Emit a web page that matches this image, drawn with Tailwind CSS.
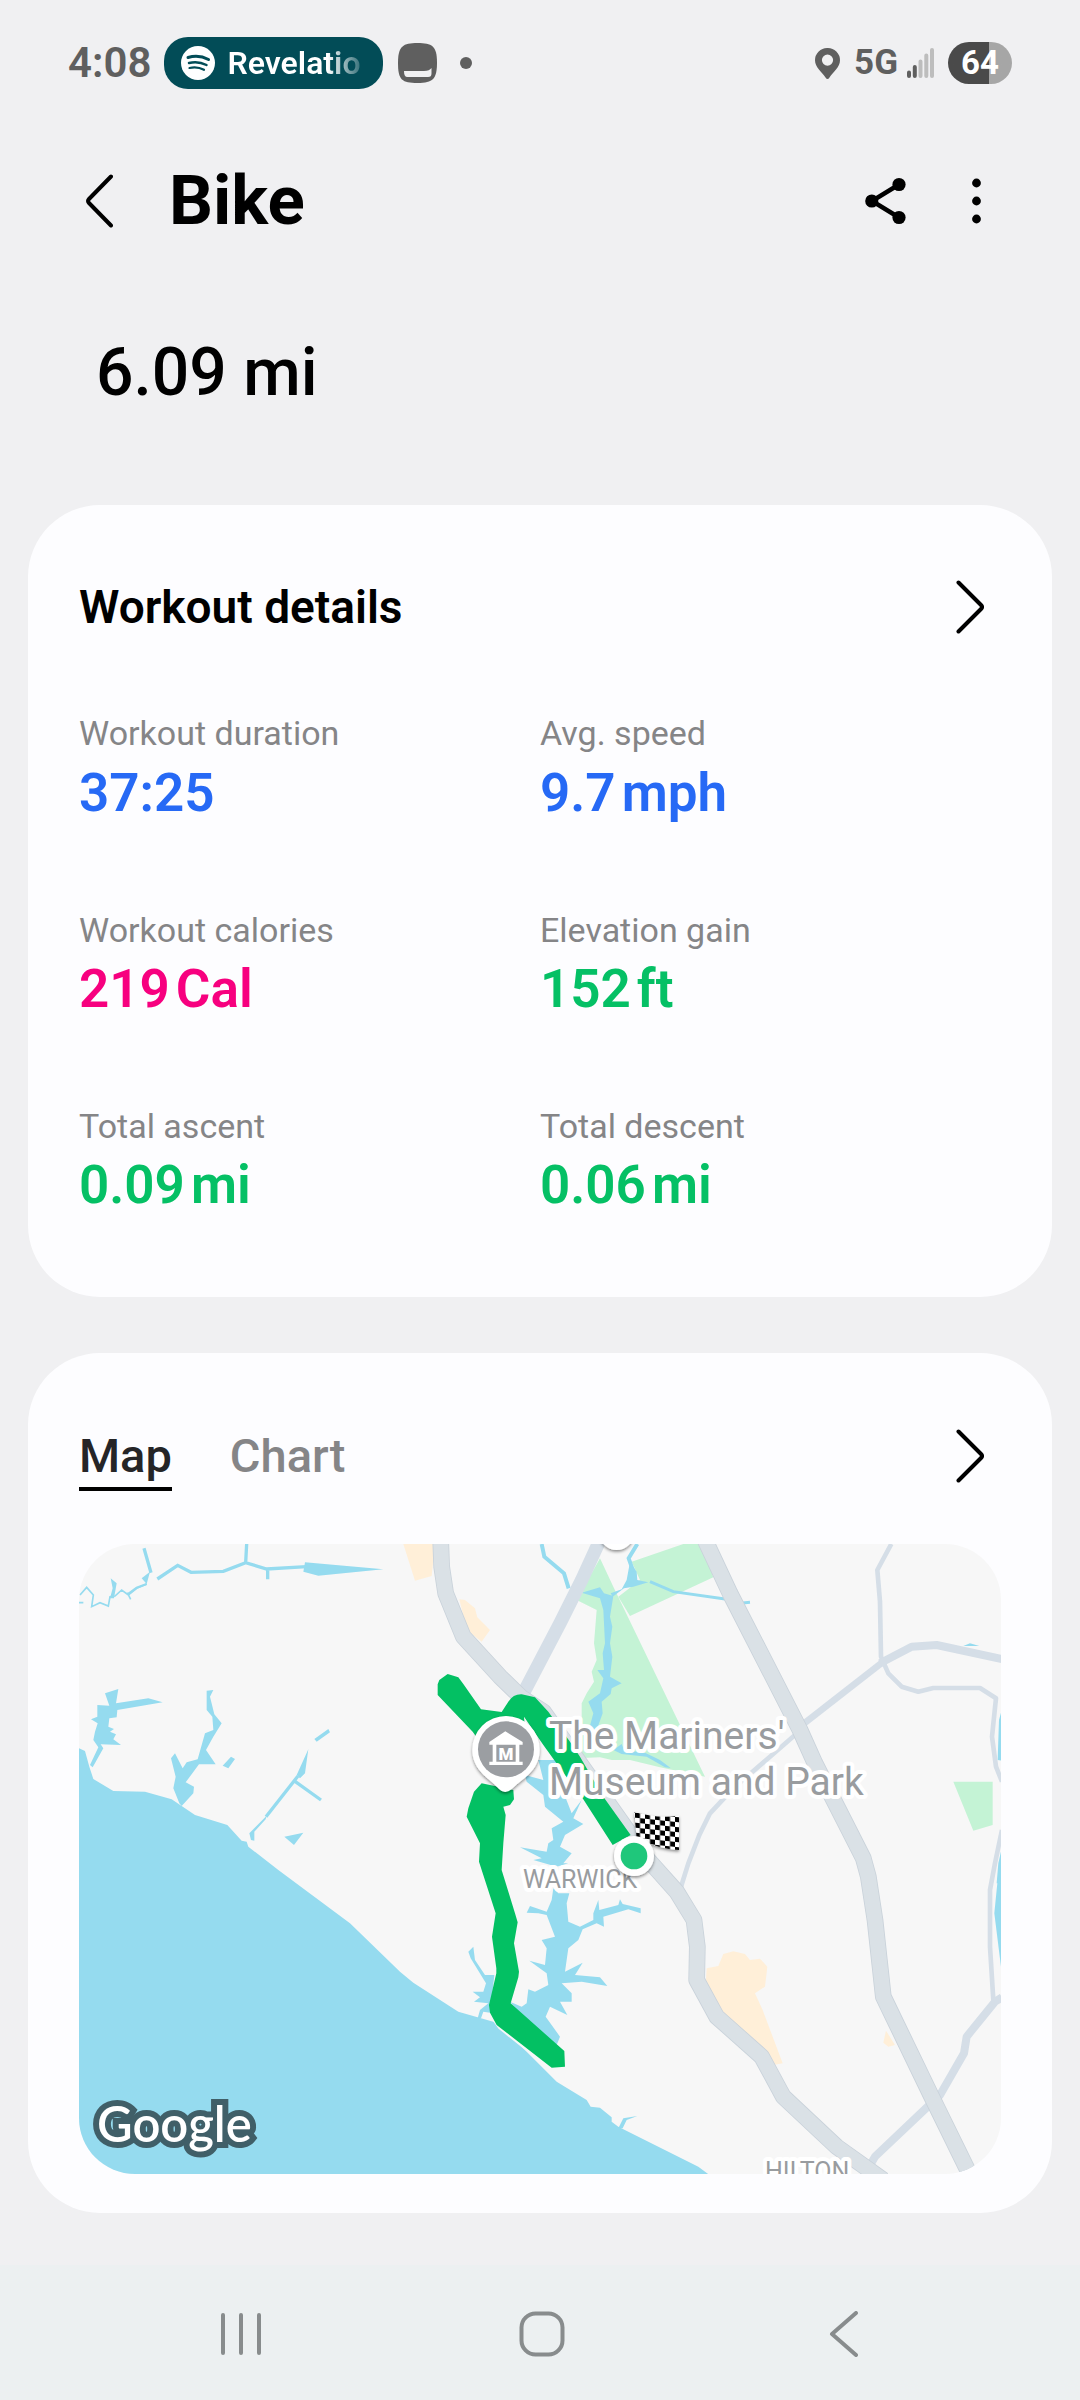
<!DOCTYPE html>
<html lang="en">
<head>
<meta charset="utf-8">
<meta name="viewport" content="width=device-width, initial-scale=1">
<title>Bike workout</title>
<script src="https://cdn.jsdelivr.net/npm/@tailwindcss/browser@4"></script>
</head>
<body class="flex min-h-screen flex-col bg-[#f0f0f2] font-['Roboto',sans-serif] text-black">

<!-- Status bar -->
<div class="flex items-center justify-between pt-[35px] pr-[68px] pl-[68px]">
  <div class="flex items-center">
    <span class="text-[42px] leading-[52px] font-semibold text-[#5f5f5f]">4:08</span>
    <div class="ml-[13px] flex h-[52px] w-[219px] items-center gap-3 rounded-3xl bg-[#024c57] pl-[17px]">
      <svg class="size-[34px] shrink-0" viewBox="0 0 34 34" fill="none" stroke="#024c57" stroke-linecap="round">
        <circle cx="17" cy="17" r="17" fill="#fff" stroke="none"/>
        <path d="M7 11.500c7-2 14.500-1.200 20.500 2" stroke-width="3"/>
        <path d="M8 17c6-1.500 12-.8 17.500 2" stroke-width="2.500"/>
        <path d="M8.500 22c5-1.200 10-.6 14.500 1.800" stroke-width="2.200"/>
      </svg>
      <span class="overflow-hidden bg-linear-to-r from-white from-75% to-white/20 bg-clip-text text-[32px] leading-[52px] font-semibold text-transparent">Revelatio</span>
    </div>
    <svg class="ml-[15px] h-[40px] w-[39px]" viewBox="0 0 39 40">
      <path d="M19.500 0C34 0 39 3 39 19.500S35 40 19.500 40 0 37 0 20 5 0 19.500 0Z" fill="#5f5f5f"/>
      <path d="M6 28h20c4 0 6-1 7.500-3v5.500c0 2.500-1 3.500-3.500 3.500H9.500C7 34 6 32 6 28Z" fill="#f0f0f2"/>
    </svg>
    <span class="ml-[23px] size-3 rounded-full bg-[#5f5f5f]"></span>
  </div>
  <div class="flex items-center">
    <svg class="h-[31px] w-[25px]" viewBox="0 0 25 31"><path fill="#5f5f5f" fill-rule="evenodd" d="M12.500 0A12.300 12.300 0 0 0 0 12.300c0 7 6.500 11 10.500 17.200q2 3 4 0C18.500 23.300 25 19.300 25 12.300A12.300 12.300 0 0 0 12.500 0Zm0 6.500a5.600 5.600 0 1 1 0 11.200 5.600 5.600 0 0 1 0-11.200Z"/></svg>
    <span class="ml-[14px] text-[35px] leading-[56px] font-bold text-[#5f5f5f]">5G</span>
    <svg class="ml-[9px] h-[30px] w-[27px]" viewBox="0 0 27 30" stroke-width="4" stroke-linecap="round">
      <path d="M2 24.500V28M7.800 19V28" stroke="#5f5f5f"/>
      <path d="M13.500 13.500V28M19.300 7.500V28M25 2V28" stroke="#bdbdbd"/>
    </svg>
    <div class="ml-[14px] flex h-[42px] w-16 items-center justify-center rounded-full bg-linear-to-r from-[#4a4a4a] from-64% to-[#a6a6a6] to-64%">
      <span class="text-[33px] leading-[42px] font-bold text-white">64</span>
    </div>
  </div>
</div>

<!-- App bar -->
<header class="mt-[62px] flex h-24 items-center pr-[99px] pl-[86px]">
  <button type="button" aria-label="Back" class="w-[27px]">
    <svg class="h-[54px] w-[27px]" viewBox="0 0 27 54" fill="none" stroke="#000" stroke-width="4" stroke-linecap="round" stroke-linejoin="round"><path d="M25 2.500 3 25q-2 2 0 4L25 51.500"/></svg>
  </button>
  <h1 class="ml-14 text-[69px] leading-[80px] font-bold">Bike</h1>
  <button type="button" aria-label="Share" class="ml-auto">
    <svg class="h-[48px] w-[41px]" viewBox="0 0 41 48"><path d="M34 7.500 7 24l27 16.500" fill="none" stroke="#000" stroke-width="4.500"/><circle cx="34" cy="7.500" r="6.600"/><circle cx="6.800" cy="24" r="6.600"/><circle cx="34" cy="40.500" r="6.600"/></svg>
  </button>
  <button type="button" aria-label="More options" class="ml-[66px]">
    <svg class="h-[46px] w-[9px]" viewBox="0 0 9 46"><circle cx="4.500" cy="5" r="4.400"/><circle cx="4.500" cy="23" r="4.400"/><circle cx="4.500" cy="41" r="4.400"/></svg>
  </button>
</header>

<main>
  <p class="mt-[90px] pl-24 text-[66px] leading-[68px] font-medium">6.09 mi</p>

  <section class="mx-7 mt-[98px] rounded-[72px] bg-[#fdfdff] px-[51px] pt-[76px] pb-[82px]">
    <div class="flex h-[52px] items-center justify-between pr-[17px]">
      <h2 class="text-[46px] leading-[52px] font-semibold">Workout details</h2>
      <button type="button" aria-label="Open workout details">
        <svg class="block h-[54px] w-[28px]" viewBox="0 0 28 54" fill="none" stroke="#000" stroke-width="4" stroke-linecap="round" stroke-linejoin="round"><path d="M2.500 2.500 25 25q2 2 0 4L2.500 51.500"/></svg>
      </button>
    </div>
    <dl class="mt-[78px] grid grid-cols-2 gap-y-[85px]">
      <div><dt class="text-[34px] leading-[44px] text-[#858587]">Workout duration</dt><dd class="mt-2 text-[53px] leading-[60px] font-semibold text-[#2669f5]">37:25</dd></div>
      <div><dt class="text-[34px] leading-[44px] text-[#858587]">Avg. speed</dt><dd class="mt-2 flex gap-1.5 text-[53px] leading-[60px] font-semibold text-[#2669f5]"><span>9.7</span><span>mph</span></dd></div>
      <div><dt class="text-[34px] leading-[44px] text-[#858587]">Workout calories</dt><dd class="mt-[7px] flex gap-1.5 text-[53px] leading-[60px] font-semibold text-[#f7007f]"><span>219</span><span>Cal</span></dd></div>
      <div><dt class="text-[34px] leading-[44px] text-[#858587]">Elevation gain</dt><dd class="mt-[7px] flex gap-1.5 text-[53px] leading-[60px] font-semibold text-[#05c065]"><span>152</span><span>ft</span></dd></div>
      <div><dt class="text-[34px] leading-[44px] text-[#858587]">Total ascent</dt><dd class="mt-[7px] flex gap-1.5 text-[53px] leading-[60px] font-semibold text-[#05c065]"><span>0.09</span><span>mi</span></dd></div>
      <div><dt class="text-[34px] leading-[44px] text-[#858587]">Total descent</dt><dd class="mt-[7px] flex gap-1.5 text-[53px] leading-[60px] font-semibold text-[#05c065]"><span>0.06</span><span>mi</span></dd></div>
    </dl>
  </section>

  <section class="mx-7 mt-14 mb-[52px] rounded-[72px] bg-[#fdfdff] px-[51px] pt-[77px] pb-[39px]">
    <div class="flex items-start justify-between pr-[17px]">
      <div role="tablist" class="flex gap-[58px]">
        <button type="button" role="tab" aria-selected="true" class="border-b-4 border-black pb-[5px] text-[47px] leading-[52px] font-medium text-[#252527]">Map</button>
        <button type="button" role="tab" aria-selected="false" class="border-b-4 border-transparent pb-[5px] text-[47px] leading-[52px] font-medium text-[#858587]">Chart</button>
      </div>
      <button type="button" aria-label="Open map" class="flex h-[52px] items-center">
        <svg class="block h-[54px] w-[28px]" viewBox="0 0 28 54" fill="none" stroke="#000" stroke-width="4" stroke-linecap="round" stroke-linejoin="round"><path d="M2.500 2.500 25 25q2 2 0 4L2.500 51.500"/></svg>
      </button>
    </div>

    <div class="mt-[53px] overflow-hidden rounded-[56px]">
      <svg class="block h-auto w-full" viewBox="0 0 922 630" role="img" aria-label="Route map">
        <defs>
          <pattern id="checks" width="30" height="30" patternUnits="userSpaceOnUse" patternTransform="translate(705 848) skewY(6)"><path fill="#fff" d="M0 0h30v30H0z"/><path d="M0 0h15v15H0zM15 15h15v15H15z"/></pattern>
          <filter id="shade" x="-20%" y="-20%" width="140%" height="140%"><feDropShadow dx="0" dy="5" stdDeviation="5" flood-opacity=".45"/></filter>
        </defs>
        <path fill="#f7f7f7" d="M0 0h922v630H0z"/>
        <g transform="scale(.33333)">
          <!-- James River shore and western creeks -->
          <g transform="translate(-27 -42)" fill="#95dbef">
            <path d="M27 655 45 663 58 710 70 747 130 783 225 785 305 808 375 855 472 885 515 932 530 935 535 950 625 1020 840 1180 990 1325 1030 1358 1165 1445 1275 1477 1355 1550 1460 1655 1550 1710 1562 1730 1590 1733 1625 1762 1625 1775 1645 1790 1885 1910 1925 1940H27Z"/>
            <path d="M705 97 940 118 745 137 700 125ZM122 145 140 160 132 205 120 205 128 175ZM215 145 240 125 230 162ZM105 490 145 477 138 520 235 505 278 517 142 540 140 562 118 565 115 590 132 597 120 605 138 613 130 628 153 645 92 643 100 655 68 712 60 705 85 652 70 630 75 605 83 580 63 568 82 560 82 525 118 527ZM410 482 430 480 420 500 433 553 455 580 430 620 408 660 437 703 387 703 347 757 372 770 370 790 335 828 328 820 310 775 317 740 303 685 315 670 338 715 350 697 383 688 405 610 430 600 427 560 410 540ZM458 707 483 680 495 687 475 715ZM733 627 775 597 780 607 740 635ZM680 735 715 658 705 730 690 745ZM590 857 538 910 543 930 553 932 553 905 587 868ZM643 920 700 908 672 945Z"/>
            <g fill="none" stroke="#95dbef" stroke-width="10">
              <path d="M222 55 243 128M262 147 323 106 363 127 460 124 527 98 590 117 710 110M530 42 527 98M593 117V148M588 860 684 738M676 755 753 810"/>
              <path stroke-width="5" d="M27 218H40M30 195 50 172 70 195 65 230 90 218 115 228 120 200 135 198 155 180 175 195 200 175 230 162M172 188 182 208"/>
              <path stroke-width="7" d="M175 192 200 173 230 162"/>
            </g>
          </g>
          <g transform="translate(963 -42)">
            <!-- Built-up areas -->
            <path fill="#ffefd8" d="M10 42H105L95 138 45 152ZM178 208 195 210 225 235 232 262 270 300 245 335 200 300ZM920 1315 955 1308 970 1272 1000 1264 1035 1272 1050 1290 1080 1286 1102 1310 1095 1370 1065 1390 1088 1440 1148 1600 1120 1605 1000 1500 915 1400ZM1450 1538 1458 1502 1485 1545 1465 1550Z"/>
            <!-- Parks -->
            <path fill="#c4f3d5" d="M600 85 640 170 915 740 780 712 690 690 545 690 545 520 560 490 582 455 575 425 590 390 582 340 590 240 530 210ZM695 95 850 42H905L940 142 690 258 655 200 720 150ZM1660 755H1778V885L1720 902Z"/>
            <path fill="#f7f7f7" d="M530 685 600 682 700 705 790 750 760 800H530Z"/>
            <!-- Creeks and lakes -->
            <g fill="#95dbef">
              <path d="M545 188 600 172 612 190 640 198 630 260 637 290 630 340 637 380 630 440 665 460 635 475 632 492 605 515 608 550 590 600 568 595 580 550 565 515 600 490 610 445 592 420 612 420 608 370 615 340 610 240 600 205ZM690 95 710 125 712 150 745 157 700 170 672 175 638 200 632 190 665 178 680 150Z"/>
              <path d="M640 660 665 642 672 660 735 668 780 690 812 714 795 712 740 680 665 672Z"/>
              <path d="M415 690 470 690 480 760 515 850 545 810 520 865 550 882 495 915 480 950 515 970 490 1000 505 1000 470 1010 400 990 425 985 360 952 440 965 445 940 460 930 455 895 490 875 435 830 430 795 380 755 375 735 430 750Z"/>
              <g transform="translate(0 990)">
                <path d="M460 85 475 100 508 100 500 130 505 185 540 200 580 180 580 160 595 120 598 150 655 135 660 118 668 132 722 145 722 160 685 148 610 170 612 200 590 190 548 208 535 240 505 265 495 335 548 308 525 345 600 352 622 378 545 365 485 370 515 400 515 425 480 425 502 465 450 440 437 470 480 530 470 555 430 540 330 425 365 440 380 430 385 388 405 395 445 375 440 340 388 302 435 315 440 265 425 240 465 230 440 165 415 160 380 158 390 138 440 155 455 120Z"/>
                <path d="M205 275 220 260 225 300 255 345 283 345 275 420 280 460 250 455 243 475H233L240 450 265 430 222 425 240 412 218 395 250 395 258 370 212 295ZM655 805 670 775 712 768 680 780 668 805ZM1803 0 1793 60 1783 160 1803 320Z"/>
              </g>
              <path d="M1804 545 1797 570 1793 690 1804 692ZM1804 960 1795 1000 1790 1060H1804ZM1690 348 1710 340 1738 348Z"/>
            </g>
            <g fill="none" stroke="#95dbef"><path stroke-width="12" d="M425 42 433 80 492 130 506 175M712 42 686 85 700 125"/><path stroke-width="9" d="M750 155 820 185 975 207M1028 219 1050 217"/></g>
            <!-- Streets -->
            <g fill="none" stroke="#d5dee7" stroke-linejoin="round">
              <path stroke-width="40" d="M600 30 545 150 480 280 362 505"/>
              <path stroke-width="14" d="M1185 615 1110 680 1000 775 930 850 898 915 865 1000 840 1080M1474 42 1432 120 1440 215 1443 380 1465 430 1505 470 1555 485 1600 474H1740L1788 505 1776 620 1788 710 1806 755M1806 900 1785 1000 1770 1080V1250L1780 1410"/>
              <path stroke-width="20" d="M1200 590 1450 395"/>
              <path stroke-width="24" d="M1440 400 1535 350 1610 345 1806 387M1806 1402 1785 1415 1700 1520 1692 1570 1620 1695 1425 1880 1405 1915"/>
            </g>
            <!-- Highways with a darker edge -->
            <g fill="none" stroke-linejoin="round">
              <g stroke="#c9d2da" stroke-width="50"><path d="M122 30 125 110 137 190 190 320 300 440 365 503 430 545 745 990 830 1085 882 1170 892 1250 890 1350 950 1460 1085 1580 1150 1700 1310 1850 1450 1950"/><path d="M915 30 990 190 1200 600 1245 700 1390 985 1405 1040 1425 1170 1450 1400 1590 1690 1715 1945"/></g>
              <g stroke="#dae1e6" stroke-width="45"><path d="M122 30 125 110 137 190 190 320 300 440 365 503 430 545 745 990 830 1085 882 1170 892 1250 890 1350 950 1460 1085 1580 1150 1700 1310 1850 1450 1950"/><path d="M915 30 990 190 1200 600 1245 700 1390 985 1405 1040 1425 1170 1450 1400 1590 1690 1715 1945"/></g>
            </g>
            <!-- Shore strip beside the route -->
            <path fill="none" stroke="#f7f7f7" stroke-width="12" d="M278 1462 300 1492 470 1628"/>
            <!-- Ridden route -->
            <path fill="#03c063" d="M113 463 118 450 143 432 175 442 190 462 243 538 305 546 325 515Q340 492 365 493L405 502 445 545 510 635 540 680 560 715 610 800 692 915 638 945 545 800 495 735 430 645 372 560 380 650H250L218 605 113 495ZM222 785 245 760 340 780 342 808 330 825 310 830 317 855 310 940 305 1020 345 1150 353 1177 342 1240 357 1325 355 1342 332 1420 493 1563 495 1610 455 1613 290 1485 270 1448 267 1425 289 1330V1315L276 1220 287 1150 237 995 240 940 200 860 205 835Z"/>
          </g>
        </g>

        <!-- Place names -->
        <g fill="#999c9f" stroke="#fff" stroke-width="8" stroke-linejoin="round" paint-order="stroke" font-family="Roboto, sans-serif">
          <text x="470" y="205" font-size="39">The Mariners'</text>
          <text x="470" y="251" font-size="39">Museum and Park</text>
          <text x="444" y="344" font-size="25">WARWICK</text>
          <text x="686" y="636" font-size="25">HILTON</text>
        </g>

        <!-- Museum pin, finish marker and flag -->
        <g transform="scale(.33333) translate(963 -42)">
          <circle cx="650" cy="7" r="53" fill="#fff" filter="url(#shade)"/>
          <path filter="url(#shade)" fill="#fff" d="M318 558a101 101 0 0 0-101 101c0 62 50 85 80 118q18 18 38 0c35-33 84-56 84-118a101 101 0 0 0-101-101Z"/>
          <circle cx="318" cy="658" r="84" fill="#9b9ea2"/>
          <path fill="#fff" d="M268 636 316 604 368 636V644H268ZM278 644H289V695H278ZM347 644H358V695H347ZM268 695H368V705H268Z"/>
          <path filter="url(#shade)" fill="url(#checks)" d="M703 846 Q760 862 800 860L837 857V960Q780 958 710 925Z"/>
          <circle cx="702" cy="978" r="60" fill="#fff" filter="url(#shade)"/>
          <circle cx="702" cy="978" r="40" fill="#1fc77b"/>
        </g>
        <text x="427" y="216" text-anchor="middle" font-family="Roboto, sans-serif" font-weight="900" font-size="17" fill="#fff">M</text>
        <text x="18" y="598" font-family="Lato, sans-serif" font-weight="600" font-size="49" fill="#fff" stroke="#405f68" stroke-width="12" paint-order="stroke">Google</text>
      </svg>
    </div>
  </section>
</main>

<!-- System navigation -->
<nav class="mt-auto grid h-[135px] grid-cols-3 items-center bg-[#ecf0f1] pt-[3px] pr-[86px] pl-[90px]">
  <button type="button" aria-label="Recent apps" class="flex justify-center">
    <svg class="h-[44px] w-[40px]" viewBox="0 0 40 44" stroke="#888c8d" stroke-width="4" stroke-linecap="round"><path d="M2 3V41M20 3V41M38 3V41"/></svg>
  </button>
  <button type="button" aria-label="Home" class="flex justify-center">
    <svg class="size-[46px]" viewBox="0 0 46 46" fill="none" stroke="#888c8d" stroke-width="4"><rect x="2.500" y="2.500" width="41" height="41" rx="14"/></svg>
  </button>
  <button type="button" aria-label="Back" class="flex justify-center">
    <svg class="h-[46px] w-[29px]" viewBox="0 0 29 46" fill="none" stroke="#888c8d" stroke-width="4" stroke-linecap="round" stroke-linejoin="round"><path d="M27 2 3 23 27 44"/></svg>
  </button>
</nav>
</body>
</html>
